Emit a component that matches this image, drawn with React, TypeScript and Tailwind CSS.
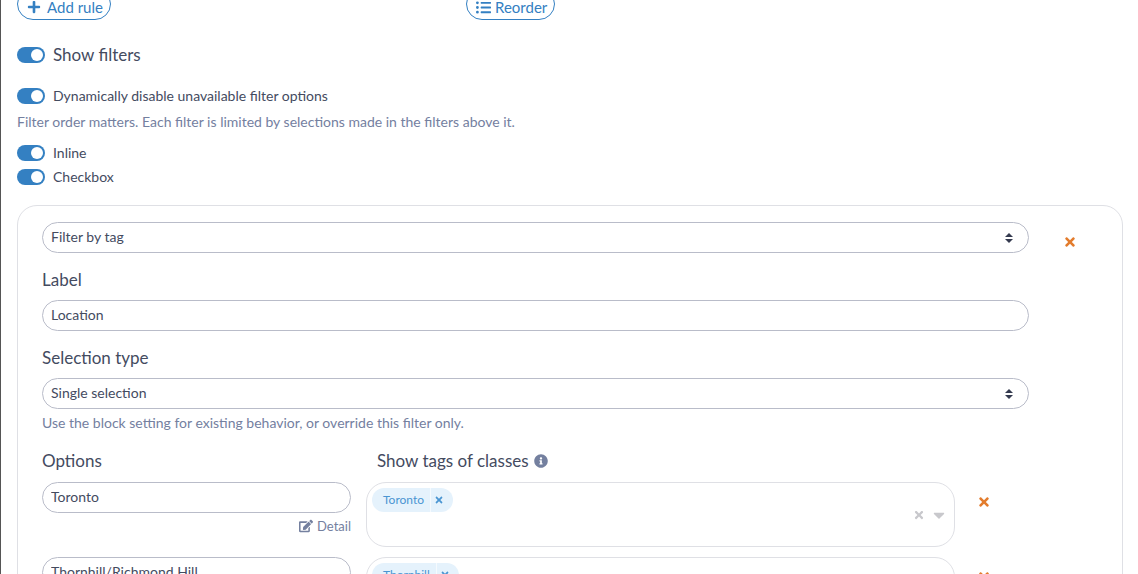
import React, { useState } from 'react';
import type { ChangeEvent } from 'react';
import { FaCaretDown, FaEdit, FaInfoCircle, FaListUl, FaPlus, FaTimes } from 'react-icons/fa';

interface SwitchProps {
  id: string;
  label: string;
  large?: boolean;
}

interface SelectFieldProps {
  id: string;
  label?: string;
  options: string[];
}

interface FilterOption {
  id: number;
  name: string;
  tags: string[];
}

const initialOptions: FilterOption[] = [
  { id: 1, name: 'Toronto', tags: ['Toronto'] },
  { id: 2, name: 'Thornhill/Richmond Hill', tags: ['Thornhill'] },
];

const inputClass =
  'block h-[31px] w-full appearance-none rounded-full border border-[#b9bcc9] bg-white px-2 pb-0.5 text-sm text-[#444b5f] focus:outline-none focus:border-[#3480c2]';

const Switch: React.FC<SwitchProps> = ({ id, label, large }) => {
  const [checked, setChecked] = useState<boolean>(true);

  return (
    <div className="flex items-center gap-2">
      <input
        id={id}
        type="checkbox"
        role="switch"
        checked={checked}
        onChange={() => setChecked(!checked)}
        className="flex h-4 w-7 shrink-0 appearance-none items-center rounded-full bg-gray-300 px-0.5 before:size-3 before:rounded-full before:bg-white checked:justify-end checked:bg-[#3480c2]"
      />
      <label htmlFor={id} className={large ? 'text-[17px] leading-6' : 'text-sm'}>
        {label}
      </label>
    </div>
  );
};

const SelectField: React.FC<SelectFieldProps> = ({ id, label, options }) => (
  <div className="relative">
    <select id={id} aria-label={label} className={inputClass}>
      {options.map((option) => (
        <option key={option}>{option}</option>
      ))}
    </select>
    <svg
      viewBox="0 0 4 5"
      className="pointer-events-none absolute inset-y-0 right-4 my-auto h-2.5 w-2 fill-[#343a4f]"
    >
      <path d="M2 0L0 2h4zm0 5L0 3h4z" />
    </svg>
  </div>
);

const App: React.FC = () => {
  const [label, setLabel] = useState<string>('Location');
  const [options, setOptions] = useState<FilterOption[]>(initialOptions);

  const handleName = (id: number, e: ChangeEvent<HTMLInputElement>) => {
    setOptions(options.map((o) => (o.id === id ? { ...o, name: e.target.value } : o)));
  };

  const setTags = (id: number, tags: string[]) => {
    setOptions(options.map((o) => (o.id === id ? { ...o, tags } : o)));
  };

  const removeOption = (id: number) => {
    setOptions(options.filter((o) => o.id !== id));
  };

  return (
    <main className="h-screen overflow-hidden border-l border-[#555555] bg-white pr-[15px] pl-4 font-['Lato',sans-serif] text-[#444b5f]">
      <div className="flex h-5 items-end overflow-hidden text-[15px] text-[#3480c2]">
        <div className="w-[449px]">
          <button type="button" className="flex h-8 items-center gap-1.5 rounded-full border border-[#3480c2] pt-1.5 pr-[7px] pl-[9px]">
            <FaPlus className="size-3.5" />
            Add rule
          </button>
        </div>
        <button type="button" className="flex h-8 items-center gap-1 rounded-full border border-[#3480c2] pt-1.5 pr-[7px] pl-[9px]">
          <FaListUl className="size-[15px]" />
          Reorder
        </button>
      </div>

      <div className="mt-[23px]">
        <Switch id="show-filters" label="Show filters" large />
      </div>
      <div className="mt-[19px]">
        <Switch id="dynamic" label="Dynamically disable unavailable filter options" />
      </div>
      <p className="mt-1.5 text-sm text-[#74809f]">
        Filter order matters. Each filter is limited by selections made in the filters above it.
      </p>
      <div className="mt-[11px] flex flex-col gap-1">
        <Switch id="inline" label="Inline" />
        <Switch id="checkbox" label="Checkbox" />
      </div>

      <section className="mt-[18px] flex rounded-[20px] border border-[#dfe0e5] px-6 py-4">
        <div className="min-w-0 flex-1">
          <SelectField id="filter-kind" label="Filter kind" options={['Filter by tag', 'Filter by date']} />

          <label htmlFor="label" className="mt-[15px] mb-2 block text-[17px] leading-6">
            Label
          </label>
          <input
            id="label"
            type="text"
            value={label}
            onChange={(e) => setLabel(e.target.value)}
            className={inputClass}
          />

          <label htmlFor="selection-type" className="mt-[15px] mb-2 block text-[17px] leading-6">
            Selection type
          </label>
          <SelectField id="selection-type" options={['Single selection', 'Multiple selection']} />
          <p className="mt-1 text-sm text-[#74809f]">
            Use the block setting for existing behavior, or override this filter only.
          </p>

          <div className="mt-4 mb-[9px] grid grid-cols-[309fr_589fr_59px] gap-x-[15px] text-[17px] leading-6">
            <h3>Options</h3>
            <h3 className="flex items-center gap-[5px] pl-[11px]">
              Show tags of classes
              <FaInfoCircle className="size-3.5 text-[#74809f]" />
            </h3>
          </div>

          <div className="flex flex-col gap-2.5">
            {options.map((option) => (
              <div key={option.id} className="grid grid-cols-[309fr_589fr_59px] gap-x-[15px]">
                <div>
                  <input
                    type="text"
                    aria-label="Option name"
                    value={option.name}
                    onChange={(e) => handleName(option.id, e)}
                    className={inputClass}
                  />
                  <button type="button" className="mt-[5px] ml-auto flex items-center gap-1 text-[13px] leading-4 text-[#74809f]">
                    <FaEdit className="size-3.5" />
                    Detail
                  </button>
                </div>

                <div className="flex h-[65px] items-start rounded-[20px] border border-[#dfe0e5] p-[5px]">
                  <div className="flex flex-1 gap-1">
                    {option.tags.map((tag) => (
                      <span
                        key={tag}
                        className="flex h-6 items-center rounded-full bg-[#e5f2fc] pl-[11px] text-xs text-[#4a95d2]"
                      >
                        {tag}
                        <button
                          type="button"
                          aria-label={`Remove ${tag}`}
                          onClick={() => setTags(option.id, option.tags.filter((t) => t !== tag))}
                          className="ml-1.5 flex h-full items-center border-l border-white/60 pr-[9px] pl-[3px]"
                        >
                          <FaTimes className="size-2.5" />
                        </button>
                      </span>
                    ))}
                  </div>
                  <div className="flex items-center gap-[5px] self-center pr-px text-[#c8c8cc]">
                    <button type="button" aria-label="Clear tags" onClick={() => setTags(option.id, [])}>
                      <FaTimes className="size-3" />
                    </button>
                    <button type="button" aria-label="Open tags">
                      <FaCaretDown className="size-[18px]" />
                    </button>
                  </div>
                </div>

                <button
                  type="button"
                  aria-label="Remove option"
                  onClick={() => removeOption(option.id)}
                  className="flex h-10 w-7 items-center justify-center text-[#e37c2d]"
                >
                  <FaTimes className="size-3.5" />
                </button>
              </div>
            ))}
          </div>
        </div>

        <div className="flex w-[69px] justify-center pl-3">
          <button
            type="button"
            aria-label="Remove filter"
            className="flex h-10 w-7 items-center justify-center text-[#e37c2d]"
          >
            <FaTimes className="size-3.5" />
          </button>
        </div>
      </section>
    </main>
  );
};

export default App;
